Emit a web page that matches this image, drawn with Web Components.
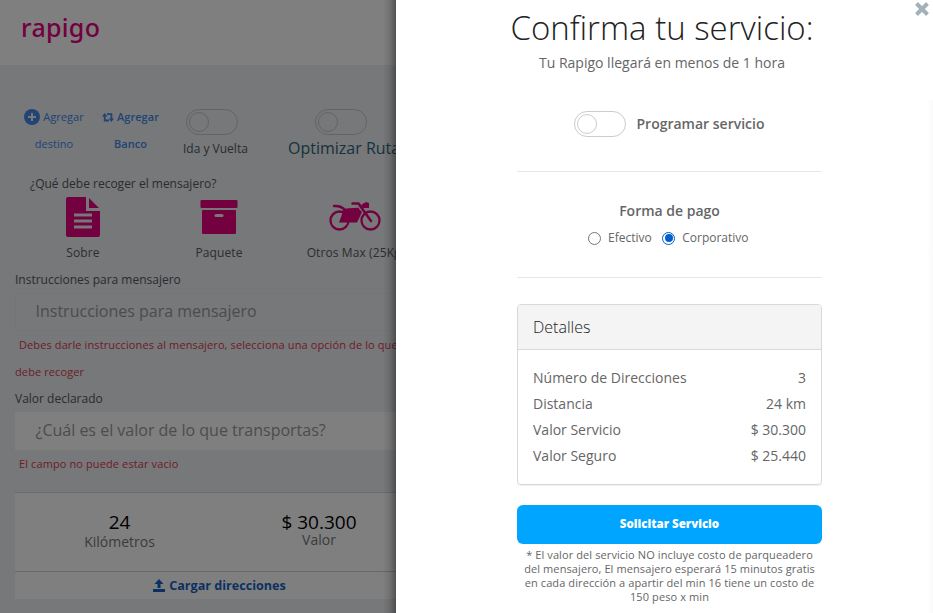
<!DOCTYPE html>
<html lang="es">
<head>
<meta charset="utf-8">
<title>Rapigo</title>
<style>
html,body{margin:0;height:100%;overflow:hidden}
body{font-family:"Open Sans","Noto Sans",sans-serif;font-size:14px;color:#666}
</style>
</head>
<body>
<rapigo-app></rapigo-app>
<script>
function define(name, html) {
  customElements.define(name, class extends HTMLElement {
    constructor() {
      super();
      this.attachShadow({mode: 'open'}).innerHTML = '<style>*{box-sizing:border-box}</style>' + html;
    }
  });
}

define('toggle-switch', `<style>
:host{display:block;width:52px;height:26px;box-sizing:border-box;border:1px solid var(--line,#ccc);border-radius:13px;padding:2px;background:var(--track,#fff)}
i{display:block;width:20px;height:20px;border:1px solid var(--line,#ccc);border-radius:50%}
</style><i></i>`);

define('package-option', `<style>
:host{display:flex;flex-direction:column;align-items:center;white-space:nowrap}
.icon{height:48px;display:flex;align-items:center;color:#e6007e}
.label{font-size:12px;line-height:18px;margin-top:3px;color:#5a5c5e;letter-spacing:.1px}
</style><div class="icon"><slot name="icon"></slot></div><div class="label"><slot></slot></div>`);

define('form-field', `<style>
:host{display:block}
.label{font-size:12px;line-height:18px;color:#55585a}
.box{height:38px;border:1px solid var(--edge);background:var(--fill);margin-top:4px;padding-left:19.500px;font-size:16px;line-height:34px;color:#999;white-space:nowrap}
.error{font-size:11px;line-height:27px;color:#e03a50;white-space:pre;padding-bottom:1px;letter-spacing:.11px}
</style><div class="label"><slot name="label"></slot></div><div class="box"><slot></slot></div><div class="error"><slot name="error"></slot></div>`);

define('stat-item', `<style>
:host{display:flex;flex-direction:column;text-align:center;gap:var(--gap,0px)}
.v{font-size:19px;line-height:24px;color:#000}
.l{font-size:14px;line-height:12px;color:#777}
</style><div class="v"><slot name="value"></slot></div><div class="l"><slot></slot></div>`);

define('order-page', `<style>
:host{display:block;background:#ecf0f4;overflow:hidden;position:relative}
header{height:65px;background:#fff;padding:9px 0 0 21px}
.logo{font:500 25px/36px "Noto Sans","Open Sans",sans-serif;color:#e6007e;letter-spacing:.3px}
.actions{display:grid;grid-template-columns:66px 88px 82px 130px;padding-left:21px;height:110px;padding-top:38px;width:440px}
.act{text-align:center;color:#4289e8;font-size:11px;line-height:27px;white-space:nowrap;letter-spacing:.06px}
.act svg{vertical-align:-4px}
.act.b{font-weight:600;padding-right:1px}
.act.b svg{vertical-align:-1px}
.sw{padding-top:6px;font-size:12px;line-height:27px;color:#55585a;white-space:nowrap}
toggle-switch{--line:#c4c8cc;--track:transparent}
.q{font-size:12px;line-height:18px;padding-left:30px;color:#55585a}
.opts{display:grid;grid-template-columns:136px 136px 137px;margin-left:15px;height:78px;width:420px}
form-field{margin-left:15px;width:440px}
.card{margin:14px 0 0 15px;width:409px;height:107px;background:#fff;border-top:1px solid #d6d9dc}
.stats{height:79px;display:grid;grid-template-columns:209px 190px;padding-top:17px;border-bottom:1px solid #ccd0d3}
.load{display:flex;justify-content:center;align-items:center;height:27px;color:#1763c6;font-weight:700;font-size:12.600px;gap:4px}
.shade{position:absolute;inset:0;background:linear-gradient(90deg,transparent calc(100% - 13px),rgba(0,0,0,.12) calc(100% - 6px),rgba(0,0,0,.36)),rgba(0,0,0,.5)}
</style>
<header><div class="logo">rapigo</div></header>
<div class="actions">
 <div class="act"><svg width="16" height="16" viewBox="0 0 16 16"><circle cx="8" cy="8" r="8" fill="#4289e8"/><path d="M8 4v8M4 8h8" stroke="#ecf0f4" stroke-width="2"/></svg> Agregar<br>destino</div>
 <div class="act b"><svg width="12" height="9" viewBox="0 0 12 9" fill="none" stroke="#4289e8" stroke-width="1.8"><path d="M2.7 2v5.5H7M5 1.2h4.4V7"/><path d="M2.7 0L0 3.5h5.4zM9.4 9L6.7 5.5H12z" fill="#4289e8" stroke="none"/></svg> Agregar<br>Banco</div>
 <div class="sw"><toggle-switch style="margin-left:11px"></toggle-switch><div style="margin-left:8px">Ida y Vuelta</div></div>
 <div class="sw"><toggle-switch style="margin-left:58px"></toggle-switch><div style="margin-left:31px;font-size:16px;line-height:27px;color:#34647c">Optimizar Ruta</div></div>
</div>
<div class="q">¿Qué debe recoger el mensajero?</div>
<div class="opts">
 <package-option><svg slot="icon" width="34" height="40" viewBox="0 0 34 40"><path d="M2 0H20V14H34V38a2 2 0 0 1-2 2H2a2 2 0 0 1-2-2V2a2 2 0 0 1 2-2zM23 1L33 11H23z" fill="currentColor"/><path d="M8 18h18M8 24h18M8 30h18" stroke="#ecf0f4" stroke-width="3"/></svg>Sobre</package-option>
 <package-option><svg slot="icon" width="38" height="34" viewBox="0 0 38 34"><rect x=".5" width="37" height="8" rx="1" fill="currentColor"/><rect x="2" y="10" width="34" height="24" rx="1" fill="currentColor"/><rect x="14.500" y="14" width="9" height="3" rx="1.500" fill="#ecf0f4"/></svg>Paquete</package-option>
 <package-option><svg slot="icon" style="margin:0 2px 2px 0" width="52" height="29" viewBox="0 0 52 29" fill="none" stroke="currentColor" stroke-width="2.300"><circle cx="10.500" cy="18.500" r="9"/><circle cx="41.500" cy="18.500" r="9"/><path d="M5 4q7-.5 11 4L29 7M23.500 1.500h6L42 19" stroke-width="2.500" stroke-linecap="round" stroke-linejoin="round"/><path d="M14 7l15-1 4 4-5 10.500H10l3-8zM32 3l5-3 3 1v5h-6z" fill="currentColor" stroke="none"/></svg>Otros Max (25Kg)</package-option>
</div>
<form-field style="--edge:#e6eaee;--fill:transparent"><span slot="label">Instrucciones para mensajero</span>Instrucciones para mensajero<span slot="error" style="display:block;text-indent:1px"> Debes darle instrucciones al mensajero, selecciona una opción de lo que
debe recoger</span></form-field>
<form-field style="--edge:#fff;--fill:#fff;margin-top:4px"><span slot="label">Valor declarado</span>¿Cuál es el valor de lo que transportas?<span slot="error" style="display:block;text-indent:1px"> El campo no puede estar vacio</span></form-field>
<div class="card"><div class="stats">
 <stat-item style="--gap:2px"><span slot="value">24</span>Kilómetros</stat-item>
 <stat-item><span slot="value">$ 30.300</span>Valor</stat-item></div>
 <div class="load"><svg width="12" height="13" viewBox="0 0 12 13" fill="currentColor"><path d="M6 0l4.500 5H7.500v4h-3V5h-3zM0 10h12v3H0z"/></svg>Cargar direcciones</div>
</div>
<div class="shade"></div>`);

define('detail-row', `<style>
:host{display:flex;justify-content:space-between;font-size:14px;line-height:26px}
</style><span><slot></slot></span><span><slot name="value"></slot></span>`);

define('detail-card', `<style>
:host{display:block;border:1px solid #d9d9d9;border-radius:4px;height:181px;box-sizing:border-box;overflow:hidden;box-shadow:0 1px 1px #0001}
.h{height:45px;background:#f4f4f4;border-bottom:1px solid #d9d9d9;padding-left:15px;font-size:16px;line-height:44px;font-weight:300;color:#222}
.b{padding:15px 15px 0}
</style><div class="h"><slot name="title"></slot></div><div class="b"><slot></slot></div>`);

define('radio-option', `<style>
:host{display:flex;align-items:center;font-size:12px;line-height:18px}
i{width:13px;height:13px;border:1px solid #767676;border-radius:50%;margin-right:7px;display:flex;align-items:center;justify-content:center}
:host([checked]) i{border-color:#005fcc}
:host([checked]) i::after{content:"";width:8px;height:8px;border-radius:50%;background:#005fcc}
</style><i></i><slot></slot>`);

define('confirm-panel', `<style>
:host{display:block;background:#fff;position:relative;overflow:hidden}
.col{margin-left:121px;width:305px;display:flex;flex-direction:column}
h1{font-size:33px;font-weight:300;line-height:48px;margin:4px 0 0 -35px;width:360px;text-align:center;color:#222;white-space:nowrap}
.sub{text-align:center;line-height:20px;margin:1px 0 0 -35px;width:360px}
.prog{display:flex;align-items:center;gap:10.500px;margin:38px 0 0 57px;font-weight:600}
.prog span{padding-bottom:2px}
hr{border:0;height:1px;background:#e7e7e7;width:100%;margin:0}
.pay{text-align:center;font-weight:600;line-height:20px;margin-top:29px}
.radios{display:flex;gap:10.500px;margin:8px 0 0 71px;height:18px}
button{margin-top:20px;height:39px;border:0;border-radius:6px;background:#00a5ff;color:#fff;font:800 11.500px "Open Sans",sans-serif;padding:0 0 2px}
.note{font-size:11px;line-height:14px;text-align:center;margin-top:4px;white-space:nowrap;letter-spacing:.1px}
.x{position:absolute;right:4px;top:2px}
.edge{position:absolute;right:0;top:100px;width:7px;bottom:0;background:linear-gradient(90deg,#fff,#fafafa)}
</style>
<div class="edge"></div>
<svg class="x" width="14" height="14" viewBox="0 0 14 14"><path d="M1.500 1.500l11 11M12.500 1.500l-11 11" stroke="#a3b1b8" stroke-width="4"/></svg>
<div class="col">
<h1>Confirma tu servicio:</h1>
<div class="sub">Tu Rapigo llegará en menos de 1 hora</div>
<div class="prog"><toggle-switch></toggle-switch><span>Programar servicio</span></div>
<hr style="margin-top:34px">
<div class="pay">Forma de pago</div>
<div class="radios"><radio-option>Efectivo</radio-option><radio-option checked>Corporativo</radio-option></div>
<hr style="margin:30px 0 26px">
<detail-card><span slot="title">Detalles</span>
<detail-row>Número de Direcciones<span slot="value">3</span></detail-row>
<detail-row>Distancia<span slot="value">24 km</span></detail-row>
<detail-row>Valor Servicio<span slot="value">$ 30.300</span></detail-row>
<detail-row>Valor Seguro<span slot="value">$ 25.440</span></detail-row></detail-card>
<button>Solicitar Servicio</button>
<div class="note">* El valor del servicio NO incluye costo de parqueadero<br>del mensajero, El mensajero esperará 15 minutos gratis<br>en cada dirección a apartir del min 16 tiene un costo de<br>150 peso x min</div>
</div>`);

define('rapigo-app', `<style>
:host{display:grid;grid-template-columns:396px 537px;width:933px;height:613px;overflow:hidden}
</style><order-page></order-page><confirm-panel></confirm-panel>`);
</script>
</body>
</html>
